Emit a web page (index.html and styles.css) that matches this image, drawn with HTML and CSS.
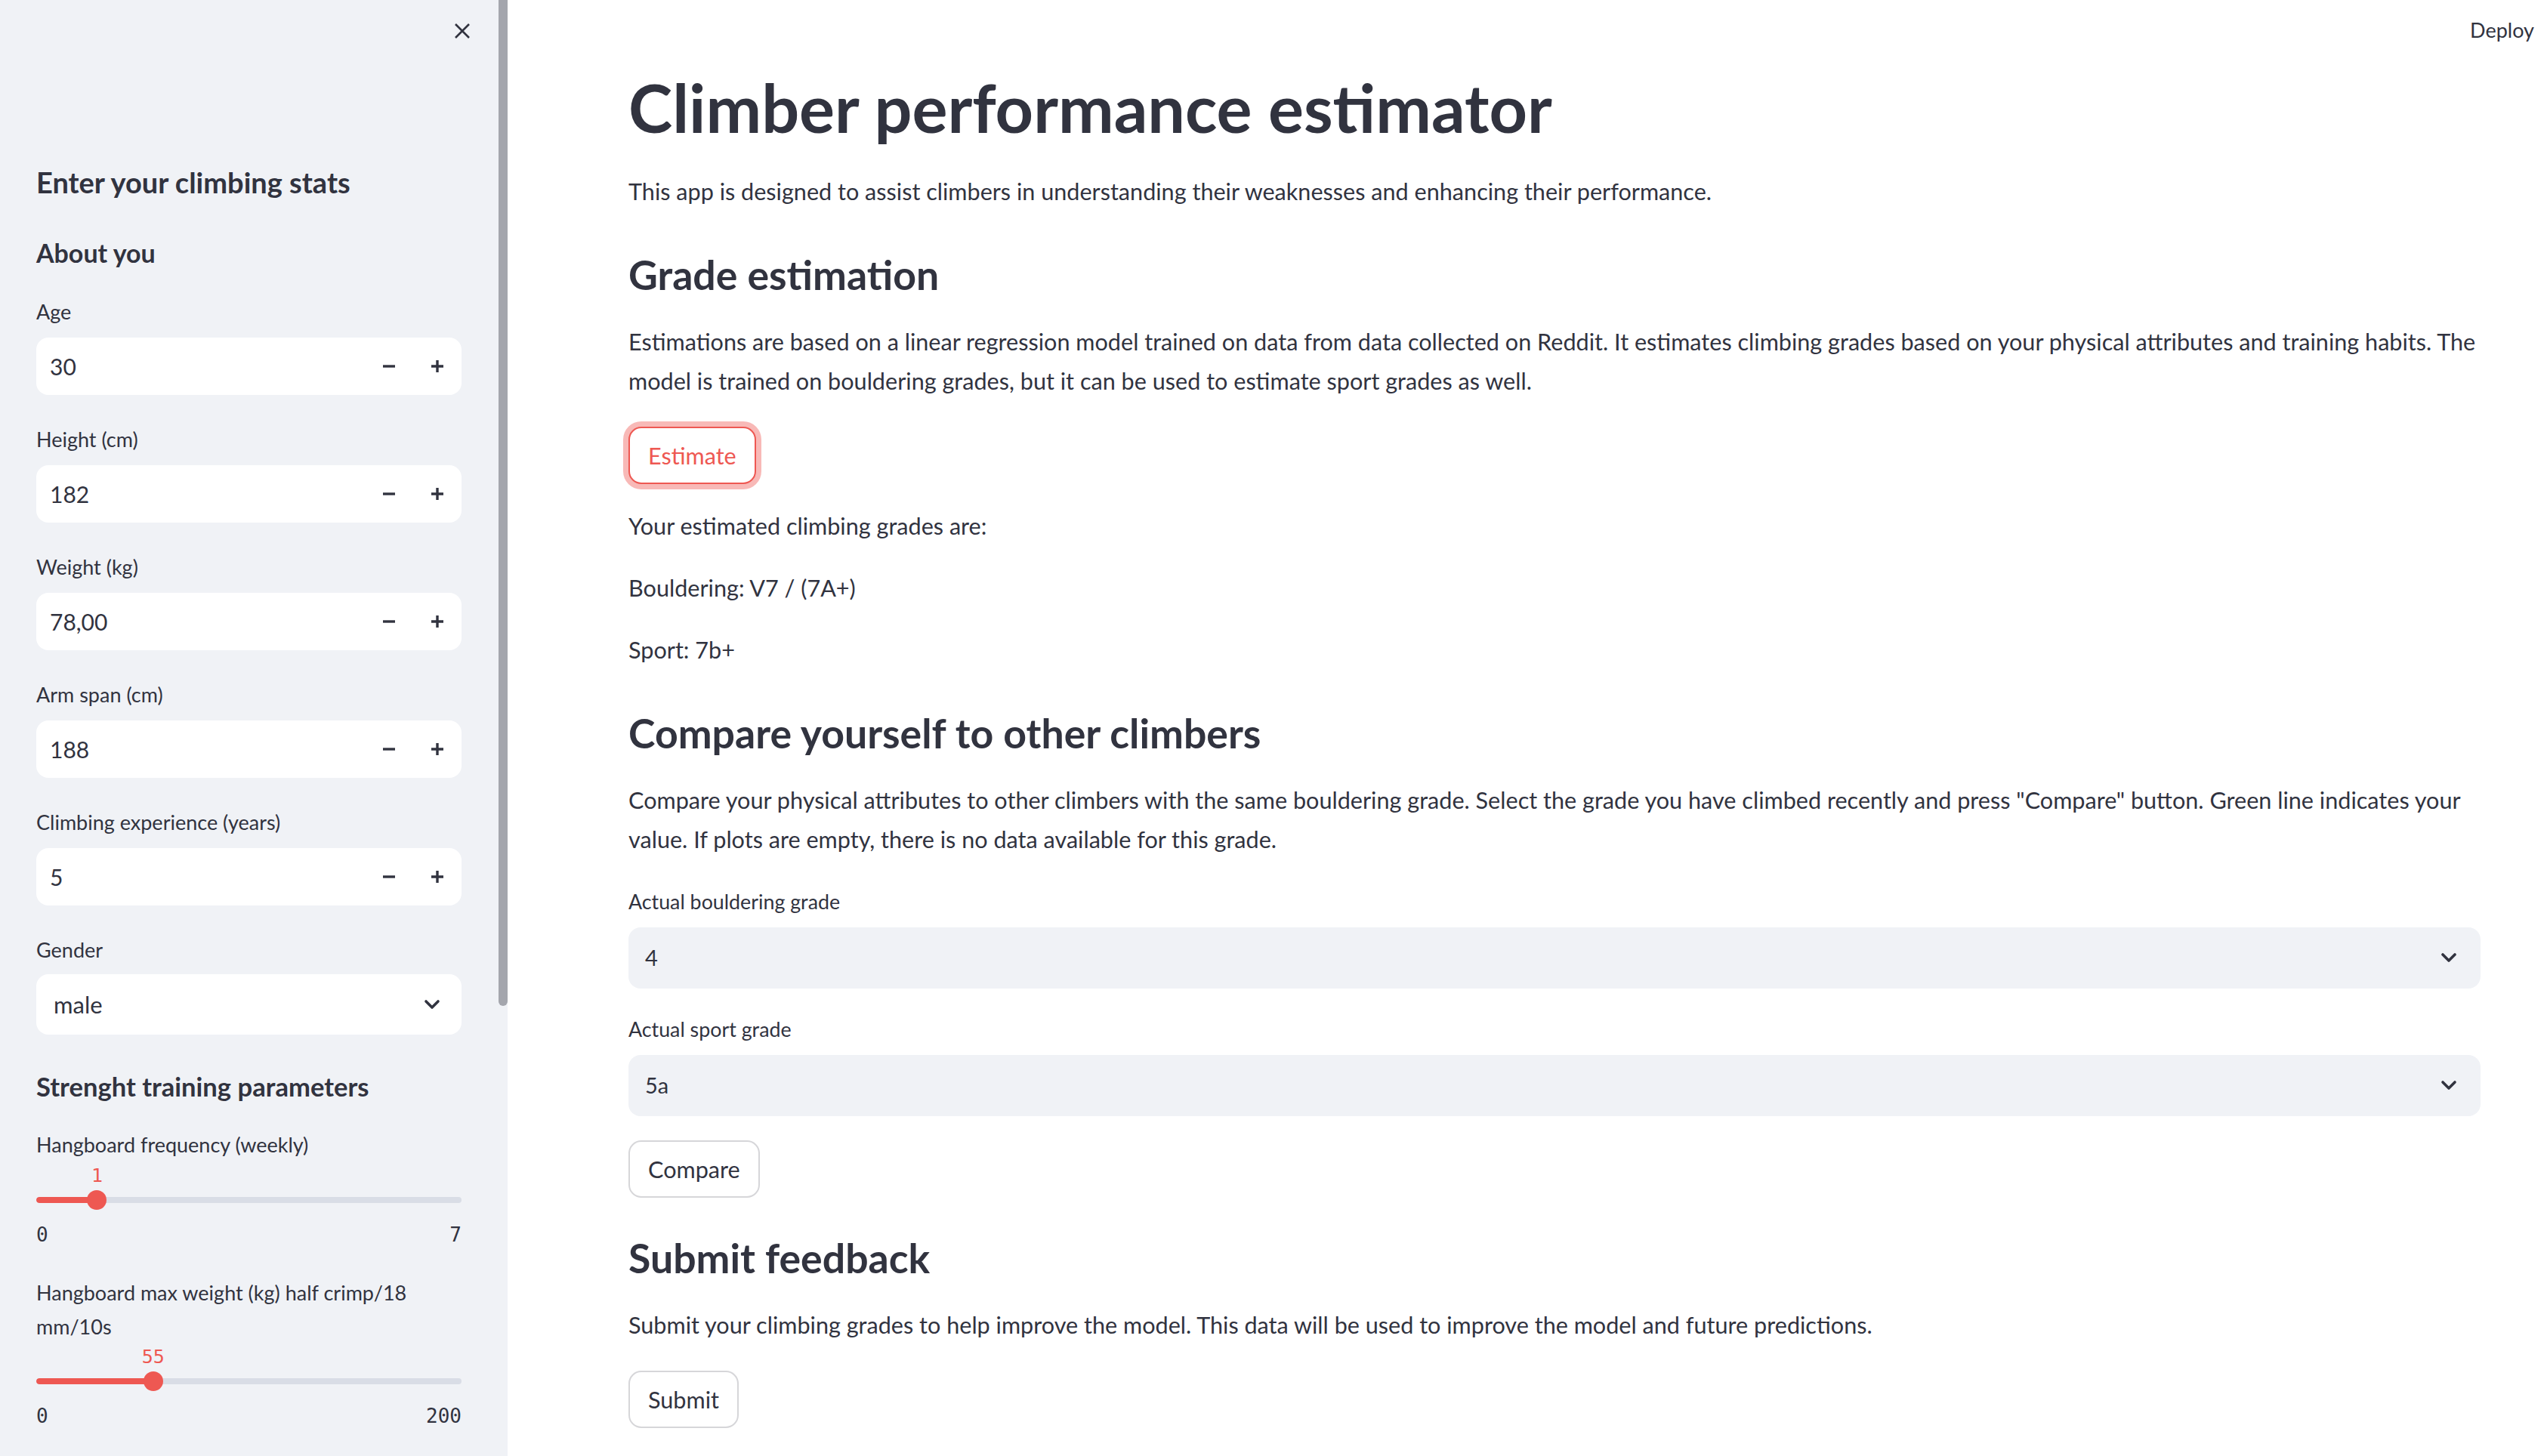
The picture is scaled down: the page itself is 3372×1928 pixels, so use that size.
FILE: index.html
```html
<!DOCTYPE html>
<html lang="en">
<head>
<meta charset="utf-8">
<title>Climber performance estimator</title>
<link rel="stylesheet" href="styles.css">
</head>
<body>
<div class="app">
  <aside class="sidebar">
    <div class="sb-header">
      <button class="close" aria-label="Close sidebar">
        <svg width="24" height="24" viewBox="0 0 24 24"><path d="M3 3 L21 21 M21 3 L3 21" stroke="#31333F" stroke-width="2.6" fill="none"/></svg>
      </button>
    </div>
    <div class="sb-content">
      <h2 class="sb-title">Enter your climbing stats</h2>
      <h3 class="sb-sub">About you</h3>

      <div class="field">
        <label class="label">Age</label>
        <div class="num-input"><span class="num-val">30</span>
          <span class="step"><svg width="18" height="18" viewBox="0 0 18 18"><path d="M1 9 H17" stroke="#31333F" stroke-width="3.4"/></svg></span>
          <span class="step"><svg width="18" height="18" viewBox="0 0 18 18"><path d="M1 9 H17 M9 1 V17" stroke="#31333F" stroke-width="3.4"/></svg></span>
        </div>
      </div>
      <div class="field">
        <label class="label">Height (cm)</label>
        <div class="num-input"><span class="num-val">182</span>
          <span class="step"><svg width="18" height="18" viewBox="0 0 18 18"><path d="M1 9 H17" stroke="#31333F" stroke-width="3.4"/></svg></span>
          <span class="step"><svg width="18" height="18" viewBox="0 0 18 18"><path d="M1 9 H17 M9 1 V17" stroke="#31333F" stroke-width="3.4"/></svg></span>
        </div>
      </div>
      <div class="field">
        <label class="label">Weight (kg)</label>
        <div class="num-input"><span class="num-val">78,00</span>
          <span class="step"><svg width="18" height="18" viewBox="0 0 18 18"><path d="M1 9 H17" stroke="#31333F" stroke-width="3.4"/></svg></span>
          <span class="step"><svg width="18" height="18" viewBox="0 0 18 18"><path d="M1 9 H17 M9 1 V17" stroke="#31333F" stroke-width="3.4"/></svg></span>
        </div>
      </div>
      <div class="field">
        <label class="label">Arm span (cm)</label>
        <div class="num-input"><span class="num-val">188</span>
          <span class="step"><svg width="18" height="18" viewBox="0 0 18 18"><path d="M1 9 H17" stroke="#31333F" stroke-width="3.4"/></svg></span>
          <span class="step"><svg width="18" height="18" viewBox="0 0 18 18"><path d="M1 9 H17 M9 1 V17" stroke="#31333F" stroke-width="3.4"/></svg></span>
        </div>
      </div>
      <div class="field">
        <label class="label">Climbing experience (years)</label>
        <div class="num-input"><span class="num-val">5</span>
          <span class="step"><svg width="18" height="18" viewBox="0 0 18 18"><path d="M1 9 H17" stroke="#31333F" stroke-width="3.4"/></svg></span>
          <span class="step"><svg width="18" height="18" viewBox="0 0 18 18"><path d="M1 9 H17 M9 1 V17" stroke="#31333F" stroke-width="3.4"/></svg></span>
        </div>
      </div>
      <div class="field">
        <label class="label">Gender</label>
        <div class="sb-select"><span>male</span>
          <svg width="22" height="14" viewBox="0 0 22 14"><path d="M3 3 L11 11 L19 3" stroke="#31333F" stroke-width="3.6" fill="none" stroke-linecap="round" stroke-linejoin="round"/></svg>
        </div>
      </div>

      <h3 class="sb-sub sb-section">Strenght training parameters</h3>

      <div class="slider-field first">
        <label class="label">Hangboard frequency (weekly)</label>
        <div class="slider">
          <div class="slider-value"><span style="left:14.29%">1</span></div>
          <div class="slider-track">
            <div class="track-bg"><div class="track-fill" style="width:14.29%"></div></div>
            <div class="thumb" style="left:14.29%"></div>
          </div>
          <div class="slider-ticks"><span>0</span><span>7</span></div>
        </div>
      </div>
      <div class="slider-field">
        <label class="label">Hangboard max weight (kg) half crimp/18 mm/10s</label>
        <div class="slider">
          <div class="slider-value"><span style="left:27.5%">55</span></div>
          <div class="slider-track">
            <div class="track-bg"><div class="track-fill" style="width:27.5%"></div></div>
            <div class="thumb" style="left:27.5%"></div>
          </div>
          <div class="slider-ticks"><span>0</span><span>200</span></div>
        </div>
      </div>
    </div>
    <div class="scroll-thumb"></div>
  </aside>

  <main class="main">
    <div class="topbar"><span class="deploy">Deploy</span></div>
    <div class="content">
      <h1 class="title">Climber performance estimator</h1>
      <p class="text">This app is designed to assist climbers in understanding their weaknesses and enhancing their performance.</p>

      <h3 class="heading">Grade estimation</h3>
      <p class="text">Estimations are based on a linear regression model trained on data from data collected on Reddit. It estimates climbing grades based on your physical attributes and training habits. The model is trained on bouldering grades, but it can be used to estimate sport grades as well.</p>
      <button class="btn btn-focus">Estimate</button>
      <p class="text">Your estimated climbing grades are:</p>
      <p class="text">Bouldering: V7 / (7A+)</p>
      <p class="text">Sport: 7b+</p>

      <h3 class="heading">Compare yourself to other climbers</h3>
      <p class="text">Compare your physical attributes to other climbers with the same bouldering grade. Select the grade you have climbed recently and press "Compare" button. Green line indicates your value. If plots are empty, there is no data available for this grade.</p>
      <label class="label-main">Actual bouldering grade</label>
      <div class="select"><span>4</span>
        <svg width="22" height="14" viewBox="0 0 22 14"><path d="M3 3 L11 11 L19 3" stroke="#31333F" stroke-width="3.6" fill="none" stroke-linecap="round" stroke-linejoin="round"/></svg>
      </div>
      <label class="label-main">Actual sport grade</label>
      <div class="select"><span>5a</span>
        <svg width="22" height="14" viewBox="0 0 22 14"><path d="M3 3 L11 11 L19 3" stroke="#31333F" stroke-width="3.6" fill="none" stroke-linecap="round" stroke-linejoin="round"/></svg>
      </div>
      <button class="btn">Compare</button>

      <h3 class="heading">Submit feedback</h3>
      <p class="text">Submit your climbing grades to help improve the model. This data will be used to improve the model and future predictions.</p>
      <button class="btn">Submit</button>
    </div>
  </main>
</div>
</body>
</html>
```

FILE: styles.css
```css
* { box-sizing: border-box; }

html, body {
  margin: 0;
  padding: 0;
}

body {
  font-family: Lato, "Noto Sans", sans-serif;
  color: #31333F;
  background: #ffffff;
  overflow: hidden;
}

.app {
  display: flex;
  height: 1928px;
}

/* ---------- Sidebar ---------- */
.sidebar {
  width: 672px;
  flex: none;
  background: #F0F2F6;
  position: relative;
  overflow: hidden;
}

.sb-header {
  display: flex;
  justify-content: flex-end;
  padding: 29px 48px 0 0;
}

.close {
  width: 24px;
  height: 24px;
  padding: 0;
  border: 0;
  background: none;
  display: block;
}

.close svg { display: block; }

.sb-content {
  display: flex;
  flex-direction: column;
  padding: 0 61px 0 48px;
}

.sb-title {
  font-size: 38px;
  font-weight: 700;
  line-height: 50px;
  margin: 163px 0 0;
}

.sb-sub {
  font-size: 34px;
  font-weight: 700;
  line-height: 44px;
  margin: 47px 0 0;
}

.sb-section {
  margin-top: 47px;
  font-size: 34.6px;
}

.field { margin-top: 35.7px; }
.sb-sub + .field { margin-top: 33px; }

.label {
  display: block;
  font-size: 27px;
  line-height: 45px;
}

.num-input {
  margin-top: 12.3px;
  height: 76px;
  background: #ffffff;
  border-radius: 16px;
  display: flex;
  align-items: center;
  padding-left: 18px;
  font-size: 30px;
}

.num-val { flex: 1; }

.step {
  width: 64px;
  display: flex;
  justify-content: center;
  align-items: center;
}

.step svg { display: block; }

.sb-select {
  margin-top: 10.3px;
  height: 80px;
  background: #ffffff;
  border-radius: 16px;
  display: flex;
  align-items: center;
  justify-content: space-between;
  padding: 0 28px 0 23px;
  font-size: 31px;
}

.sb-select svg, .select svg { display: block; }

.slider-field { margin-top: 38.7px; }
.slider-field.first { margin-top: 32px; }

.slider { margin-top: 3px; }
.slider-field + .slider-field .slider { margin-top: 2px; }

.slider-value {
  position: relative;
  height: 30px;
  font-family: "DejaVu Sans Mono", "Liberation Mono", monospace;
  font-size: 25px;
  line-height: 30px;
  color: #EE5852;
}

.slider-value span {
  position: absolute;
  top: 1px;
  transform: translateX(-50%);
}

.slider-track {
  position: relative;
  margin-top: 5px;
  height: 26px;
}

.track-bg {
  position: absolute;
  left: 0;
  right: 0;
  top: 9px;
  height: 8px;
  border-radius: 4px;
  background: #D9DDE6;
  overflow: hidden;
}

.track-fill {
  height: 100%;
  background: #EE5852;
  border-radius: 4px;
}

.thumb {
  position: absolute;
  top: 0;
  width: 26px;
  height: 26px;
  margin-left: -13px;
  border-radius: 50%;
  background: #EE5852;
}

.slider-ticks {
  margin-top: 18px;
  display: flex;
  justify-content: space-between;
  font-family: "DejaVu Sans Mono", "Liberation Mono", monospace;
  font-size: 26px;
  line-height: 30px;
}

.scroll-thumb {
  position: absolute;
  top: 0;
  right: 0;
  width: 12px;
  height: 1332px;
  background: #A4A6AD;
  border-radius: 0 0 6px 6px;
}

/* ---------- Main ---------- */
.main {
  flex: 1;
  min-width: 0;
  display: flex;
  flex-direction: column;
}

.topbar {
  height: 78px;
  display: flex;
  justify-content: flex-end;
  align-items: center;
  padding-right: 17px;
}

.deploy {
  font-size: 27px;
}

.content {
  display: flex;
  flex-direction: column;
  padding: 0 88px 0 160px;
}

.title {
  font-size: 88px;
  font-weight: 700;
  line-height: 114px;
  margin: 7px 0 0;
}

.text {
  font-size: 30.6px;
  line-height: 52px;
  margin: 30px 0 0;
}

.title + .text { margin-top: 29px; }
.heading + .text { margin-top: 28px; }

.heading {
  font-size: 53.6px;
  font-weight: 700;
  line-height: 72px;
  margin: 47px 0 0;
}

.btn + .heading { margin-top: 43px; }

.btn {
  align-self: flex-start;
  margin-top: 34px;
  height: 76px;
  padding: 0 24px;
  border: 2px solid rgba(49, 51, 63, 0.2);
  border-radius: 17px;
  background: #ffffff;
  font-family: inherit;
  font-size: 30.6px;
  color: #31333F;
}

.select + .btn { margin-top: 32px; }

.btn-focus {
  border-color: #EE5852;
  color: #EE5852;
  box-shadow: 0 0 0 7px rgba(240, 100, 96, 0.45);
}

.label-main {
  display: block;
  font-size: 26.8px;
  line-height: 40px;
  margin-top: 36px;
}

.select + .label-main { margin-top: 34px; }

.select {
  margin-top: 14px;
  height: 81px;
  background: #F0F2F6;
  border-radius: 16px;
  display: flex;
  align-items: center;
  justify-content: space-between;
  padding: 0 31px 2px 22px;
  font-size: 29px;
}
```
